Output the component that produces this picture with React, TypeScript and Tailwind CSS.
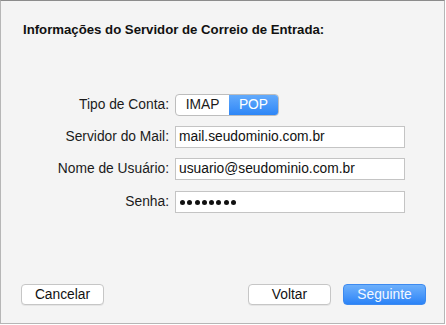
import React from "react";

const font = { fontFamily: '"Liberation Sans", Arial, Helvetica, sans-serif' };

function Label({ children }: { children: React.ReactNode }) {
  return (
    <div className="w-[168px] shrink-0 text-right text-[13.8px] leading-[16px] text-[#1b1b1b]">
      {children}
    </div>
  );
}

function Field({ children }: { children: React.ReactNode }) {
  return (
    <div className="ml-[6px] flex h-[22px] w-[230px] items-center border border-[#c4c4c4] bg-white pl-[3px] text-[13.8px] leading-[16px] text-[#111]">
      {children}
    </div>
  );
}

function Button({ children, primary }: { children: React.ReactNode; primary?: boolean }) {
  return primary ? (
    <div className="flex h-[21px] w-[83px] items-center justify-center rounded-[4px] border border-[#3d8af0] bg-gradient-to-b from-[#6db0fb] to-[#2a83f7] text-[13.8px] leading-[16px] text-[#f3f8ff]">
      {children}
    </div>
  ) : (
    <div className="flex h-[21px] w-[83px] items-center justify-center rounded-[4px] border border-[#c6c6c6] bg-white text-[13.8px] leading-[16px] text-[#111] shadow-[0_1px_0_rgba(0,0,0,0.06)]">
      {children}
    </div>
  );
}

export default function App() {
  return (
    <div className="h-[325px] w-[446px] bg-white" style={font}>
      <div className="flex h-[324px] w-[445px] flex-col border border-[#b6b6b6] border-t-[#8c8c8c] bg-[#f4f4f4]">
        <div className="pl-[22px] pt-[21px] text-[13.2px] font-bold leading-[16px] text-[#111]">
          Informações do Servidor de Correio de Entrada:
        </div>

        <div className="mt-[56px] flex flex-col">
          <div className="flex items-center">
            <Label>Tipo de Conta:</Label>
            <div className="ml-[6px] flex h-[22px] overflow-hidden rounded-[4px] border border-[#bdbdbd] bg-white">
              <div className="flex w-[53px] items-center justify-center text-[13.8px] leading-[16px] text-[#1b1b1b]">
                IMAP
              </div>
              <div className="flex w-[49px] items-center justify-center bg-gradient-to-b from-[#62aafb] to-[#2d86f7] text-[13.8px] leading-[16px] text-white">
                POP
              </div>
            </div>
          </div>

          <div className="mt-[10px] flex items-center">
            <Label>Servidor do Mail:</Label>
            <Field>mail.seudominio.com.br</Field>
          </div>

          <div className="mt-[10px] flex items-center">
            <Label>Nome de Usuário:</Label>
            <Field>usuario@seudominio.com.br</Field>
          </div>

          <div className="mt-[11px] flex items-center">
            <Label>Senha:</Label>
            <Field>
              <div className="ml-[1px] flex gap-[2.3px]">
                {[0, 1, 2, 3, 4, 5, 6, 7].map((i) => (
                  <span key={i} className="block h-[5px] w-[5px] rounded-full bg-[#111]" />
                ))}
              </div>
            </Field>
          </div>
        </div>

        <div className="flex-1" />

        <div className="flex items-center pb-[18px] pl-[20px] pr-[18px]">
          <Button>Cancelar</Button>
          <div className="flex-1" />
          <Button>Voltar</Button>
          <div className="w-[12px]" />
          <Button primary>Seguinte</Button>
        </div>
      </div>
    </div>
  );
}
